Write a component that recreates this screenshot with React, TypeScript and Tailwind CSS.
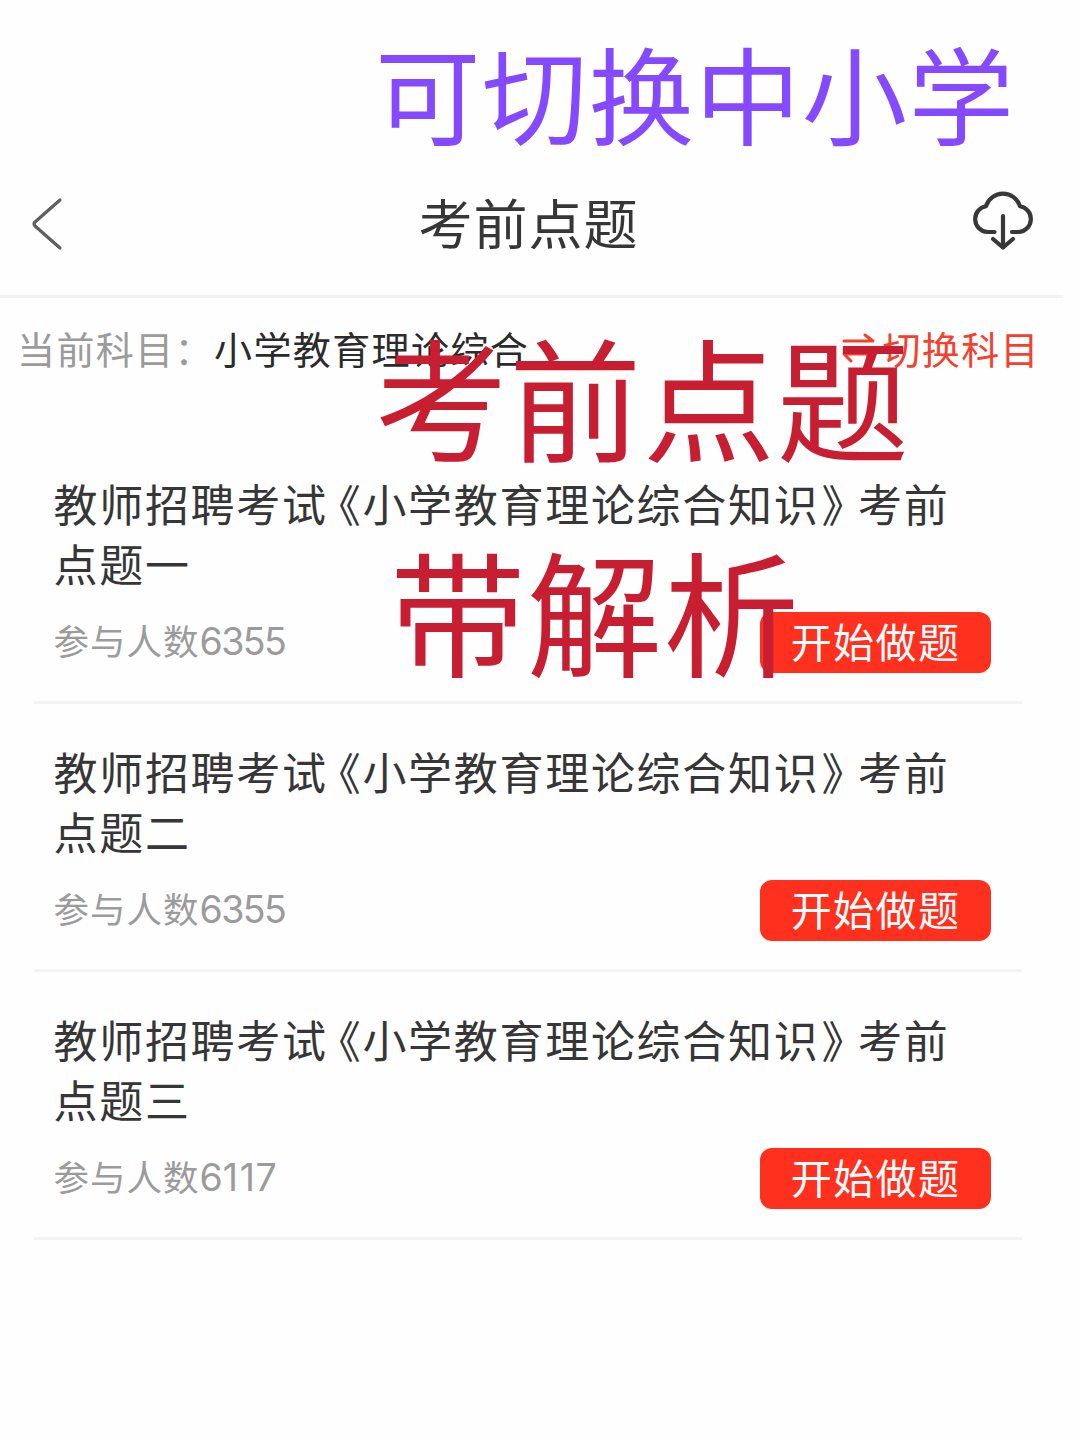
const papers = [
    { id: 1, order: '一', digits: ['6', '3', '5', '5'] },
    { id: 2, order: '二', digits: ['6', '3', '5', '5'] },
    { id: 3, order: '三', digits: ['6', '1', '1', '7'] },
];

function BackIcon() {
    return (
        <svg className="w-[34px] h-[56px]" viewBox="0 0 34 56" fill="none" stroke="#5f5f5f" strokeWidth="3.2" strokeLinecap="round" strokeLinejoin="round">
            <path d="M30 5 L5 27 Q3 29 5 31 L30 53" />
        </svg>
    );
}

function CloudDownloadIcon() {
    return (
        <svg className="w-[64px] h-[62px] mb-[6px]" viewBox="0 0 64 62" fill="none" stroke="#383838" strokeWidth="4.2" strokeLinecap="round" strokeLinejoin="round">
            <path d="M23.5 43 H16.5 A13 13 0 0 1 15 17.2 A17.8 17.8 0 0 1 49 17.2 A13 13 0 0 1 47.5 43 H41" />
            <path d="M32 27 V58" />
            <path d="M22 50 L32 58.5 L42 50" />
        </svg>
    );
}

function SwapIcon() {
    return (
        <svg className="w-[34px] h-[30px]" viewBox="0 0 34 30" fill="none" stroke="#f4412e" strokeWidth="3" strokeLinecap="round" strokeLinejoin="round">
            <path d="M2 8 H31 L23 2" />
            <path d="M31 21 H2 L9 28" />
        </svg>
    );
}

function PaperItem({ order, digits }: { order: string; digits: string[] }) {
    return (
        <li className="ml-[34px] w-[988px] h-[268px] pl-[19.5px] border-b-[3px] border-[#f3f3f3]">
            <h2 className="pt-[37px] text-[44px] leading-[60px] tracking-[1.7px] text-[#363636] whitespace-nowrap">
                教师招聘考试<span className="-ml-[11px]">《</span>小学教育理论综合知识<span className="-mr-[9px] ml-[2px]">》</span>考前
                <br />
                点题{order}
            </h2>
            <div className="flex items-start justify-between mt-[19px] pr-[31px] h-[61px]">
                <p className="-mt-[2px] text-[35.5px] leading-[60px] tracking-[1px] text-[#9b9b9b] whitespace-nowrap">
                    参与人数
                    <span className="font-['Inter'] text-[37.5px] tracking-[-1.6px]">
                        {digits.map((digit, i) => (
                            <span key={i} className={digit === '1' ? 'mr-[2px] ml-[1.5px]' : ''}>{digit}</span>
                        ))}
                    </span>
                </p>
                <button className="w-[231px] h-[61px] pb-[5px] rounded-xl bg-[#ff301e] text-white text-[41px] leading-[56px] tracking-[1.4px] whitespace-nowrap">
                    开始做题
                </button>
            </div>
        </li>
    );
}

export default function App() {
    return (
        <div className="relative w-[1080px] h-[1440px] overflow-hidden bg-[#fefefe] font-['Noto_Sans_CJK_SC',sans-serif]">
            <header className="flex items-center justify-between w-[1063px] h-[298px] pt-[151px] pl-[30px] pr-[28px] border-b-[3px] border-[#f1f1f1]">
                <BackIcon />
                <h1 className="ml-[22px] pb-[2px] text-[54px] leading-[80px] tracking-[1px] text-[#363636]">考前点题</h1>
                <CloudDownloadIcon />
            </header>

            <div className="flex items-start justify-between w-[1063px] h-[107px] pt-[20px] pl-[17px] pr-[23px] text-[38px] leading-[60px] tracking-[1.4px] whitespace-nowrap">
                <p className="text-[#2b2b2b]">
                    <span className="text-[#9b9b9b]">当前科目：</span>小学教育理论综合
                </p>
                <button className="flex items-center gap-[6px] text-[#f4412e]">
                    <SwapIcon />
                    切换科目
                </button>
            </div>

            <ul className="mt-[31px]">
                {papers.map((paper) => (
                    <PaperItem key={paper.id} order={paper.order} digits={paper.digits} />
                ))}
            </ul>

            {/* Promo captions laid over the page */}
            <p className="absolute left-[375px] top-[31px] text-[105.5px] leading-[120px] tracking-[1.2px] text-[#8549ff] whitespace-nowrap">可切换中小学</p>
            <p className="absolute left-[375px] top-[324px] text-[132.5px] leading-[140px] tracking-[1.4px] text-[#c81e32] whitespace-nowrap">考前点题</p>
            <p className="absolute left-[390px] top-[538px] text-[135.5px] leading-[140px] tracking-[1.2px] text-[#c81e32] whitespace-nowrap">带解析</p>
        </div>
    );
}
